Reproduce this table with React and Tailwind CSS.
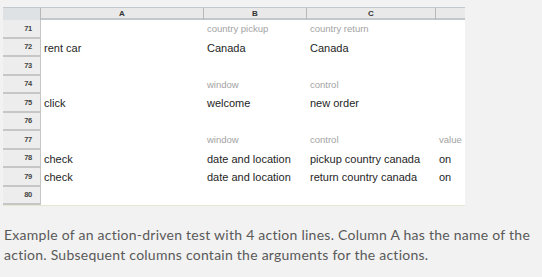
const cols = "grid grid-cols-[38px_163px_103px_129px_29px]";

const rows = [
  { n: 71, label: true, cells: ["", "country pickup", "country return", ""] },
  { n: 72, cells: ["rent car", "Canada", "Canada", ""] },
  { n: 73, cells: ["", "", "", ""] },
  { n: 74, label: true, cells: ["", "window", "control", ""] },
  { n: 75, cells: ["click", "welcome", "new order", ""] },
  { n: 76, cells: ["", "", "", ""] },
  { n: 77, label: true, cells: ["", "window", "control", "value"] },
  { n: 78, cells: ["check", "date and location", "pickup country canada", "on"] },
  { n: 79, cells: ["check", "date and location", "return country canada", "on"] },
  { n: 80, cells: ["", "", "", ""] },
];

const Cell = ({ text, label }) => (
  <div
    className={`flex items-center pl-[3px] whitespace-nowrap overflow-visible ${
      label ? "text-[9.5px] text-[#a3a3a3]" : "text-[11px] text-[#1e1e1e]"
    }`}
  >
    {text}
  </div>
);

export default function App() {
  return (
    <div className="w-[542px] h-[277px] bg-[#f2f2f2] pt-[7px] pl-[3px] overflow-hidden font-['Liberation_Sans',Arial,sans-serif]">
      <div className="w-[462px]">
        {/* column header */}
        <div className={`${cols} h-[13px] border-t border-b-2 border-[#c3c8cd] bg-[#e9e9e9]`}>
          <div className="bg-[#dfe2e5] border-r border-[#b8b8b8]" />
          <div className="flex items-center justify-center text-[8px] font-bold text-[#333] border-r border-[#b8b8b8]">A</div>
          <div className="flex items-center justify-center text-[8px] font-bold text-[#333] border-r border-[#b8b8b8]">B</div>
          <div className="flex items-center justify-center text-[8px] font-bold text-[#333] border-r border-[#b8b8b8]">C</div>
          <div />
        </div>

        {/* rows */}
        <div className="border-b border-[#e3e8d2]">
          {rows.map((r) => (
            <div key={r.n} className={`${cols} h-[18.5px] bg-white`}>
              <div className="flex items-center justify-end pr-[8px] bg-[#ededed] border-b-2 border-r border-[#c6c6c6] text-[7.5px] font-bold text-[#444] tracking-[-0.3px]">
                {r.n}
              </div>
              {r.cells.map((c, i) => (
                <Cell key={i} text={c} label={r.label} />
              ))}
            </div>
          ))}
        </div>
      </div>

      <p className="mt-[19px] ml-[1px] w-[540px] text-[14px] leading-[20px] tracking-[0.25px] text-[#595959] font-['Lato','Open_Sans',sans-serif]">
        Example of an action-driven test with 4 action lines. Column A has the name of the
        action. Subsequent columns contain the arguments for the actions.
      </p>
    </div>
  );
}
